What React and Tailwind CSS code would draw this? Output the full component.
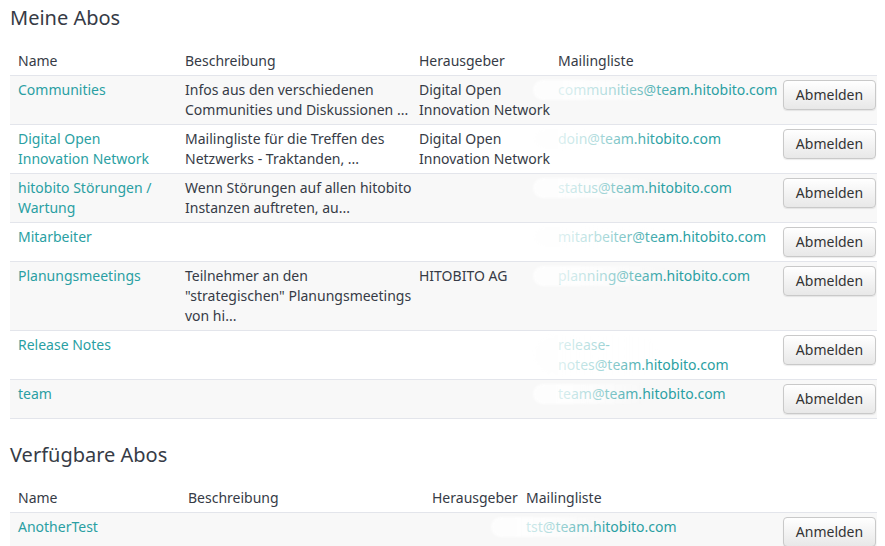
import React from 'react';

const meine = [
  {
    name: 'Communities',
    desc: 'Infos aus den verschiedenen Communities und Diskussionen ...',
    pub: 'Digital Open Innovation Network',
    mail: 'communities@team.hitobito.com',
    fade: 'w-[150px]',
  },
  {
    name: 'Digital Open Innovation Network',
    desc: 'Mailingliste für die Treffen des Netzwerks - Traktanden, ...',
    pub: 'Digital Open Innovation Network',
    mail: 'doin@team.hitobito.com',
    fade: 'w-[125px]',
  },
  {
    name: 'hitobito Störungen / Wartung',
    desc: 'Wenn Störungen auf allen hitobito Instanzen auftreten, au...',
    pub: '',
    mail: 'status@team.hitobito.com',
    fade: 'w-[125px]',
  },
  { name: 'Mitarbeiter', desc: '', pub: '', mail: 'mitarbeiter@team.hitobito.com', fade: 'w-[135px]' },
  {
    name: 'Planungsmeetings',
    desc: 'Teilnehmer an den\n"strategischen" Planungsmeetings von hi...',
    pub: 'HITOBITO AG',
    mail: 'planning@team.hitobito.com',
    fade: 'w-[135px]',
  },
  { name: 'Release Notes', desc: '', pub: '', mail: 'release-notes@team.hitobito.com', fade: 'w-[125px]' },
  { name: 'team', desc: '', pub: '', mail: 'team@team.hitobito.com', fade: 'w-[115px]' },
];

const Mail = ({ mail, fade, offset = '-left-[25px]' }) => (
  <div className="relative">
    <span className="text-[#2a9fa3]">{mail}</span>
    <div
      className={`pointer-events-none absolute top-0 h-full rounded-full bg-linear-to-r from-white/85 from-20% via-white/65 to-white/0 blur-[1px] ${offset} ${fade}`}
    />
  </div>
);

const Btn = ({ children }) => (
  <button className="h-[30px] w-[93px] rounded-[4px] border border-[#c9c9c9] bg-linear-to-b from-white to-[#e8e8e8] text-[14px] text-[#333] shadow-[0_1px_1px_rgba(0,0,0,0.08)]">
    {children}
  </button>
);

const Head = () => (
  <thead>
    <tr className="text-left">
      <th className="py-1 pl-2 pr-[14px] font-normal">Name</th>
      <th className="py-1 pl-1 font-normal">Beschreibung</th>
      <th className="px-1 py-1 font-normal whitespace-nowrap">Herausgeber</th>
      <th className="py-1 pl-1 font-normal">Mailingliste</th>
      <th />
    </tr>
  </thead>
);

export default function App() {
  return (
    <div
      className="min-h-screen bg-white pl-[10px] pr-[8px] text-[14px] leading-5 text-[#363b46]"
      style={{ fontFamily: '"Noto Sans", "Open Sans", sans-serif' }}
    >
      <h2 className="pt-[4px] text-[20px] font-normal leading-7">Meine Abos</h2>
      <table className="mt-[15px] w-[867px] table-fixed border-collapse">
        <colgroup>
          <col className="w-[171px]" />
          <col className="w-[234px]" />
          <col className="w-[139px]" />
          <col className="w-[225px]" />
          <col className="w-[98px]" />
        </colgroup>
        <Head />
        <tbody>
          {meine.map((r, i) => (
            <tr key={r.name} className={`border-t border-b border-[#e3e5eb] align-top ${i % 2 === 0 ? 'bg-[#f8f8f8]' : 'bg-white'}`}>
              <td className="py-1 pl-2 pr-[14px]">
                <a className="text-[#2a9fa3]">{r.name}</a>
              </td>
              <td className="whitespace-pre-line py-1 pl-1">{r.desc}</td>
              <td className="px-1 py-1">{r.pub}</td>
              <td className="py-1 pl-1">
                <Mail mail={r.mail} fade={r.fade} />
              </td>
              <td className="py-1 pl-1">
                <Btn>Abmelden</Btn>
              </td>
            </tr>
          ))}
        </tbody>
      </table>

      <h2 className="mt-[22px] text-[20px] font-normal leading-7">Verfügbare Abos</h2>
      <table className="mt-[15px] w-[867px] table-fixed border-collapse">
        <colgroup>
          <col className="w-[174px]" />
          <col className="w-[244px]" />
          <col className="w-[94px]" />
          <col className="w-[257px]" />
          <col className="w-[98px]" />
        </colgroup>
        <Head />
        <tbody>
          <tr className="border-t border-b border-[#e3e5eb] bg-[#f8f8f8] align-top">
            <td className="py-1 pl-2 pr-[14px]">
              <a className="text-[#2a9fa3]">AnotherTest</a>
            </td>
            <td className="py-1 pl-1" />
            <td className="px-1 py-1" />
            <td className="py-1 pl-1">
              <Mail mail="tst@team.hitobito.com" fade="w-[120px]" offset="-left-[35px]" />
            </td>
            <td className="py-1 pl-1">
              <Btn>Anmelden</Btn>
            </td>
          </tr>
        </tbody>
      </table>
    </div>
  );
}
